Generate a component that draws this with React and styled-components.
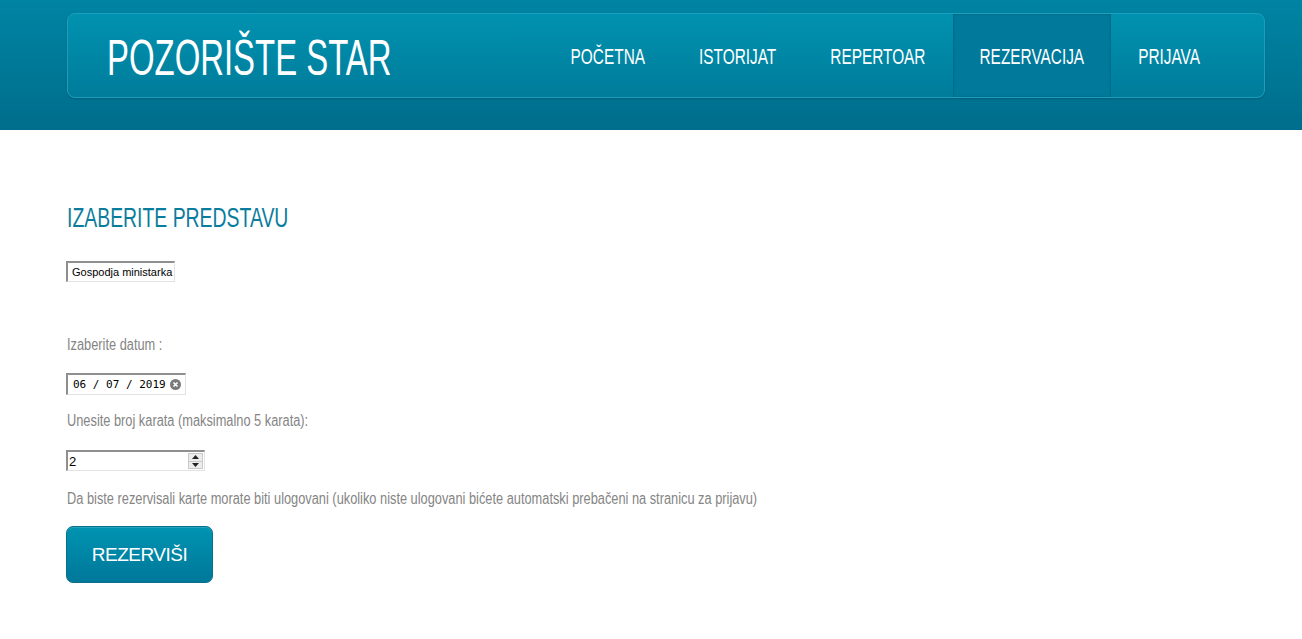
import React from "react";
import styled, { createGlobalStyle } from "styled-components";

const sans = `"Liberation Sans", Arial, sans-serif`;

const GlobalStyle = createGlobalStyle`
  html, body {
    margin: 0;
    padding: 0;
    background: #fff;
  }
  body {
    font-family: ${sans};
  }
`;

const Header = styled.header`
  height: 130px;
  box-sizing: border-box;
  padding-top: 13px;
  background: linear-gradient(to bottom, #0084a3, #006d8c);
`;

const NavBox = styled.div`
  margin-left: 67px;
  width: 1198px;
  height: 85px;
  box-sizing: border-box;
  display: flex;
  align-items: stretch;
  justify-content: space-between;
  padding: 0 37px 0 39px;
  border: 1px solid #1b9fbc;
  border-radius: 8px;
  background: linear-gradient(to bottom, #0092b0, #007c9a);
  box-shadow: 0 1px 2px rgba(0, 0, 0, 0.18);
`;

/* the site's face is a condensed sans: narrow a regular one */
const Squeeze = styled.span`
  display: inline-block;
  white-space: nowrap;
  transform: scaleX(${(p) => p.$scale});
  transform-origin: left center;
`;

/* same idea, but drawn small and stretched up so its layout width is the real one */
const Tall = styled.span`
  display: inline-block;
  white-space: nowrap;
  line-height: 1;
  transform: scaleY(${(p) => p.$scale});
`;

const Logo = styled.div`
  display: flex;
  align-items: center;
  padding-top: 5px;
  color: #fff;
  font-size: 50px;
`;

const Menu = styled.nav`
  display: flex;
  align-items: stretch;
`;

const MenuItem = styled.a`
  display: flex;
  align-items: center;
  padding: 3px 27px 0;
  color: #fff;
  font-size: 15.4px;
  text-decoration: none;
  background: ${(p) => (p.$active ? "#00799a" : "transparent")};
  box-shadow: ${(p) =>
    p.$active
      ? "inset 1px 0 2px rgba(0,0,0,0.12), inset -1px 0 2px rgba(0,0,0,0.12)"
      : "none"};
`;

const Main = styled.main`
  padding: 0 66px;
  display: flex;
  flex-direction: column;
  align-items: flex-start;
`;

const Title = styled.h2`
  margin: 71px 0 0 1px;
  font-size: 28px;
  line-height: 34px;
  font-weight: normal;
  color: #0a7c9d;
`;

const Label = styled.p`
  margin: ${(p) => p.$top}px 0 0 1px;
  font-size: 16px;
  line-height: 20px;
  color: #858585;
`;

const fieldBorder = `
  box-sizing: border-box;
  border-style: solid;
  border-width: 2px 1px 1px 2px;
  border-color: #8f8f8f #e2e2e2 #e2e2e2 #8f8f8f;
  background: #fff;
`;

const Select = styled.select`
  ${fieldBorder}
  appearance: none;
  margin-top: 26px;
  width: 109px;
  height: 21px;
  padding: 0 0 0 4px;
  font-family: ${sans};
  font-size: 11px;
  color: #000;
  outline: none;
`;

const DateBox = styled.div`
  ${fieldBorder}
  margin-top: 18px;
  width: 120px;
  height: 22px;
  display: flex;
  align-items: center;
  gap: 3px;
  padding: 0 4px 0 5px;
`;

const DateText = styled.input`
  width: 94px;
  border: 0;
  padding: 0;
  outline: none;
  font-family: "DejaVu Sans Mono", "Liberation Mono", monospace;
  font-size: 11px;
  color: #000;
  background: transparent;
`;

const NumberBox = styled.div`
  ${fieldBorder}
  margin-top: 19px;
  width: 139px;
  height: 21px;
  display: flex;
  align-items: center;
  padding: 0 1px;
`;

const NumberText = styled.input`
  flex: 1;
  min-width: 0;
  border: 0;
  padding: 0;
  outline: none;
  font-family: ${sans};
  font-size: 13px;
  color: #000;
  background: transparent;
`;

const Spinner = styled.div`
  width: 15px;
  height: 16px;
  display: flex;
  flex-direction: column;
  border: 1px solid #c9c9c9;
  box-sizing: border-box;
  background: #ececec;
`;

const SpinHalf = styled.div`
  flex: 1;
  display: flex;
  align-items: center;
  justify-content: center;
  border-top: ${(p) => (p.$down ? "1px solid #c9c9c9" : "0")};
`;

const Button = styled.button`
  margin-top: 17px;
  width: 147px;
  height: 57px;
  box-sizing: border-box;
  border: 1px solid #0a6f8b;
  border-radius: 7px;
  background: linear-gradient(to bottom, #0093b1, #00789a);
  box-shadow: inset 0 1px 0 rgba(255, 255, 255, 0.15);
  color: #fff;
  font-family: ${sans};
  font-size: 19px;
  letter-spacing: -0.5px;
  cursor: pointer;
`;

const ClearIcon = () => (
  <svg width="11" height="11" viewBox="0 0 11 11">
    <circle cx="5.5" cy="5.5" r="5.5" fill="#7a7a7a" />
    <path d="M3.5 3.5 L7.5 7.5 M7.5 3.5 L3.5 7.5" stroke="#fff" strokeWidth="1.6" />
  </svg>
);

const Arrow = ({ down }) => (
  <svg width="7" height="4" viewBox="0 0 7 4">
    <path d={down ? "M0 0 L7 0 L3.5 4 Z" : "M0 4 L7 4 L3.5 0 Z"} fill="#222" />
  </svg>
);

const menu = ["POČETNA", "ISTORIJAT", "REPERTOAR", "REZERVACIJA", "PRIJAVA"];

export default function App() {
  return (
    <>
      <GlobalStyle />
      <Header>
        <NavBox>
          <Logo>
            <Squeeze $scale={0.658}>POZORIŠTE STAR</Squeeze>
          </Logo>
          <Menu>
            {menu.map((item) => (
              <MenuItem key={item} href="#" $active={item === "REZERVACIJA"}>
                <Tall $scale={1.43}>{item}</Tall>
              </MenuItem>
            ))}
          </Menu>
        </NavBox>
      </Header>
      <Main>
        <Title>
          <Squeeze $scale={0.693}>IZABERITE PREDSTAVU</Squeeze>
        </Title>
        <Select defaultValue="gm">
          <option value="gm">Gospodja ministarka</option>
        </Select>
        <Label $top={53}>
          <Squeeze $scale={0.8}>Izaberite datum :</Squeeze>
        </Label>
        <DateBox>
          <DateText readOnly value="06 / 07 / 2019" />
          <ClearIcon />
        </DateBox>
        <Label $top={16}>
          <Squeeze $scale={0.8}>Unesite broj karata (maksimalno 5 karata):</Squeeze>
        </Label>
        <NumberBox>
          <NumberText readOnly value="2" />
          <Spinner>
            <SpinHalf>
              <Arrow />
            </SpinHalf>
            <SpinHalf $down>
              <Arrow down />
            </SpinHalf>
          </Spinner>
        </NumberBox>
        <Label $top={18}>
          <Squeeze $scale={0.8}>
            Da biste rezervisali karte morate biti ulogovani (ukoliko niste ulogovani bićete
            automatski prebačeni na stranicu za prijavu)
          </Squeeze>
        </Label>
        <Button>REZERVIŠI</Button>
      </Main>
    </>
  );
}
